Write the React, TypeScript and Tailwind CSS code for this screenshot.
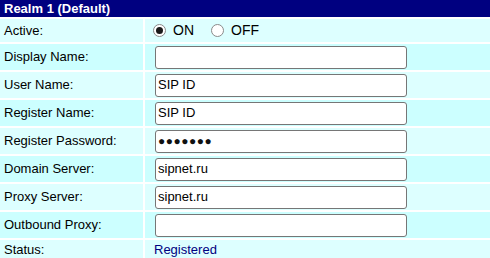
const rows: { label: string; value?: string; password?: boolean }[] = [
  { label: "Display Name:", value: "" },
  { label: "User Name:", value: "SIP ID" },
  { label: "Register Name:", value: "SIP ID" },
  { label: "Register Password:", value: "●●●●●●●", password: true },
  { label: "Domain Server:", value: "sipnet.ru" },
  { label: "Proxy Server:", value: "sipnet.ru" },
  { label: "Outbound Proxy:", value: "" },
];

function Radio({ checked }: { checked?: boolean }) {
  return (
    <span className="flex h-[13px] w-[13px] items-center justify-center rounded-full border border-[#8a8a8a] bg-white">
      {checked && <span className="h-[7px] w-[7px] rounded-full bg-[#1a1a1a]" />}
    </span>
  );
}

function Field({ value, password }: { value: string; password?: boolean }) {
  return (
    <div className="flex h-[23px] w-[252px] items-center rounded-[3px] border border-[#767676] bg-white pl-[2px] text-[13px] text-black">
      {password ? <span className="text-[12px] tracking-[0.5px] text-[#111]">{value}</span> : value}
    </div>
  );
}

export default function App() {
  return (
    <div className="h-[258px] w-[490px] overflow-hidden bg-white font-['Liberation_Sans',Arial,sans-serif] text-[13px] text-black">
      <div className="grid grid-cols-[143px_1fr] gap-[2px]">
        <div className="col-span-2 flex h-[17px] items-center bg-[#000080] pl-[4px] font-bold text-white">
          Realm 1 (Default)
        </div>

        <div className="flex h-[23px] items-center bg-[#ddffff] pl-[4px]">Active:</div>
        <div className="flex h-[23px] items-center bg-[#ddffff] pl-[8px]">
          <Radio checked />
          <span className="ml-[7px] text-[14px]">ON</span>
          <span className="ml-[17px]">
            <Radio />
          </span>
          <span className="ml-[7px] text-[14px]">OFF</span>
        </div>

        {rows.map((r, i) => {
          const bg = i % 2 === 0 ? "bg-[#ccffff]" : "bg-[#ddffff]";
          return (
            <div key={r.label} className="contents">
              <div className={`flex h-[26px] items-center pl-[4px] ${bg}`}>{r.label}</div>
              <div className={`flex h-[26px] items-center pl-[10px] ${bg}`}>
                <Field value={r.value ?? ""} password={r.password} />
              </div>
            </div>
          );
        })}

        <div className="flex h-[20px] items-center bg-[#ddffff] pl-[4px]">Status:</div>
        <div className="flex h-[20px] items-center bg-[#ddffff] pl-[9px] text-[#000080]">Registered</div>
      </div>
    </div>
  );
}
